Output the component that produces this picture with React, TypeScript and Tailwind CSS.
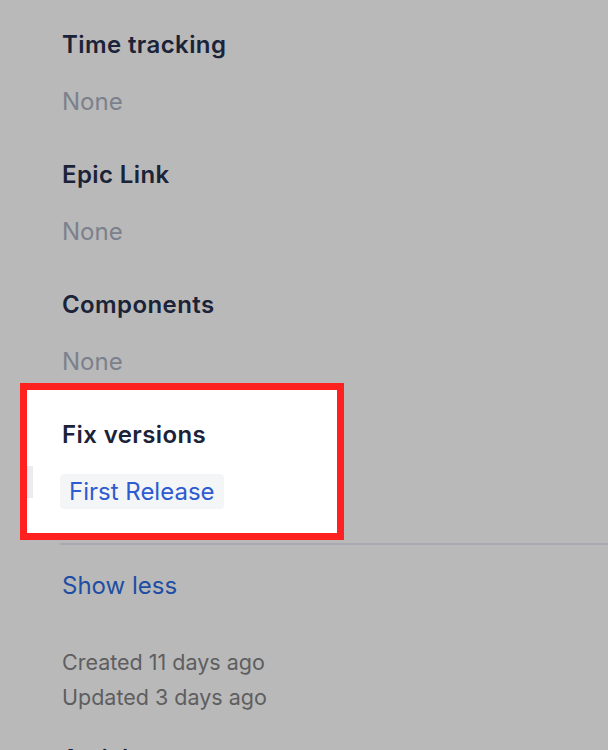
export default function App() {
  const fields = [
    { label: "Time tracking", value: "None" },
    { label: "Epic Link", value: "None" },
    { label: "Components", value: "None" },
  ];

  return (
    <div className="h-[750px] w-[608px] overflow-hidden bg-[#b9b9b9] font-['Inter',sans-serif]">
      <div className="pt-[30px]">
        {fields.map((field, index) => (
          <div
            key={field.label}
            className={index === fields.length - 1 ? "pl-[62px] pb-[6px]" : "pl-[62px] pb-[43px]"}
          >
            <p className="text-[24px] leading-[30px] font-semibold tracking-[0.4px] text-[#1b2338]">{field.label}</p>
            <p className="mt-[27px] text-[24px] leading-[30px] text-[#7b818c]">{field.value}</p>
          </div>
        ))}

        <div className="ml-[20px] flex w-[324px] border-[7px] border-[#ff2020] bg-white">
          <div className="mt-[76px] h-[32px] w-[6px] shrink-0 bg-[#ebecf0]" />
          <div className="pl-[27px] pt-[30px] pb-[24px]">
            <p className="pl-[2px] text-[24px] leading-[30px] font-semibold tracking-[0.4px] text-[#1b2338]">Fix versions</p>
            <span className="mt-[24px] inline-block rounded-[4px] bg-[#f4f5f7] px-[9px] text-[24px] leading-[35px] text-[#2d5bd0]">
              First Release
            </span>
          </div>
        </div>

        <div className="ml-[60px] mt-[3px] h-[2px] bg-[#a9a9b1]" />

        <div className="pl-[62px]">
          <button type="button" className="mt-[26px] block text-[24px] leading-[30px] text-[#1e4ea3]">
            Show less
          </button>
          <div className="mt-[44px] text-[21.5px] leading-[35px] text-[#5e5e60]">
            <p>Created 11 days ago</p>
            <p>Updated 3 days ago</p>
          </div>
          <div className="mt-[29px] flex items-center justify-between pr-[78px]">
            <p className="text-[24px] leading-[30px] font-semibold text-[#1b2338]">Activity</p>
            <span className="size-[18px] rounded-full bg-[#3b4152]" />
          </div>
        </div>
      </div>
    </div>
  );
}
